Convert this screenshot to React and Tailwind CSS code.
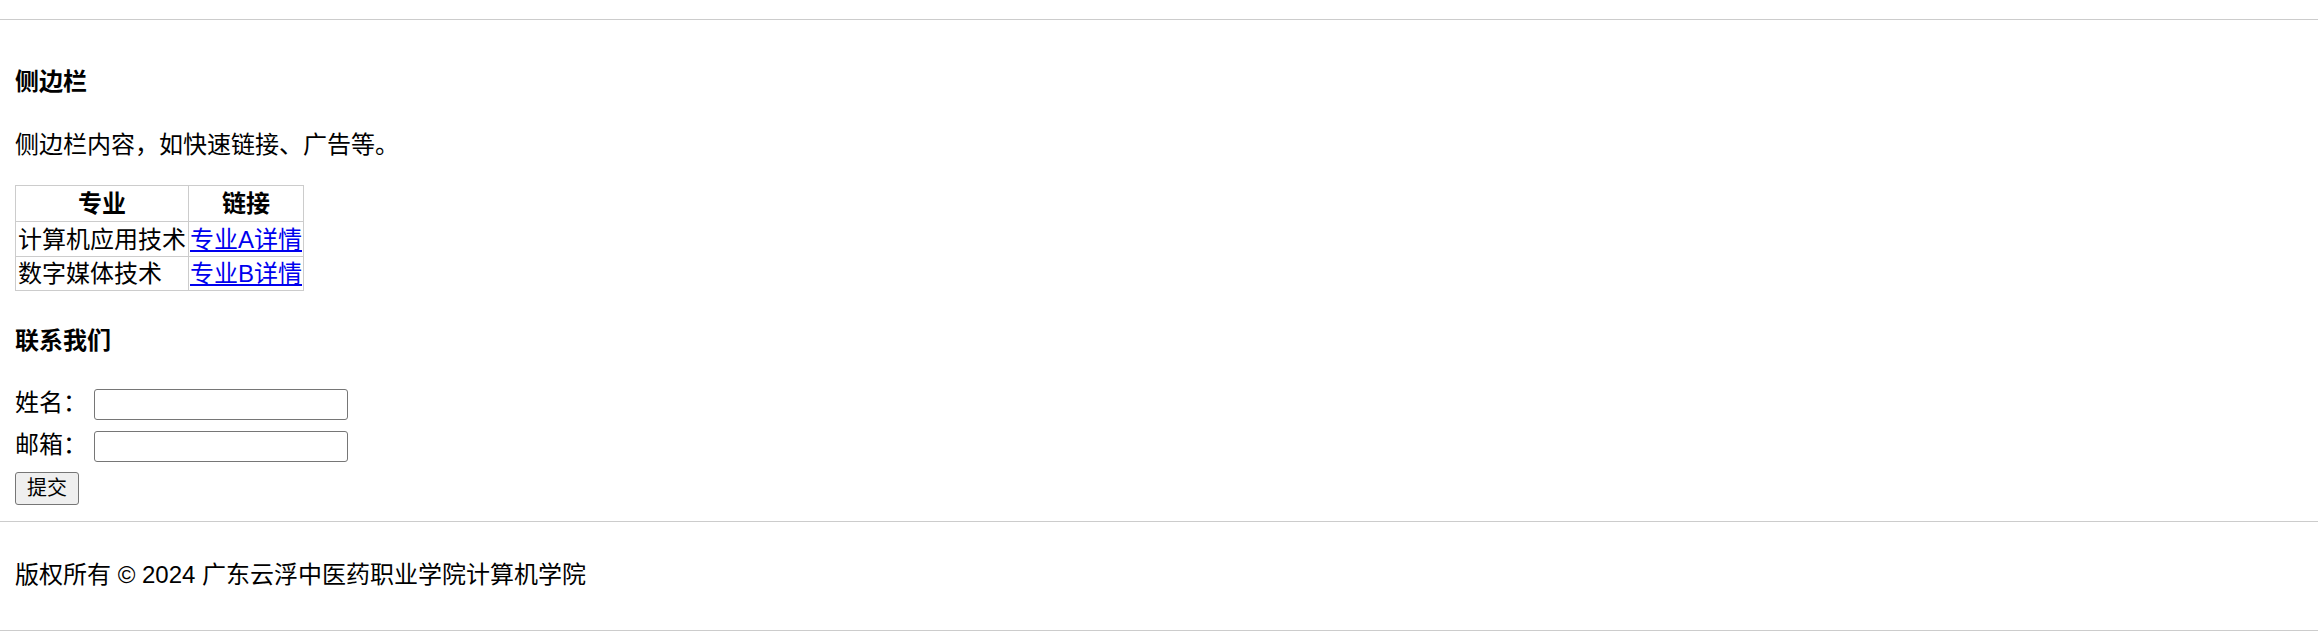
export default function App() {
  return (
    <div className="bg-white text-black text-[24px] font-['Liberation_Sans','Noto_Sans_CJK_SC',sans-serif]">
      <div className="h-[20px] border-b border-[#cccccc]" />
      <aside className="px-[15px] pb-[16px]">
        <h3 className="mt-[44px] font-bold leading-[36px]">侧边栏</h3>
        <p className="mt-[27px] leading-[36px]">侧边栏内容，如快速链接、广告等。</p>
        <table className="mt-[22px] border-collapse">
          <thead>
            <tr>
              <th className="h-[36px] w-[172px] border border-[#cccccc] p-0 text-center font-bold leading-[34px] whitespace-nowrap">专业</th>
              <th className="h-[36px] w-[114px] border border-[#cccccc] p-0 text-center font-bold leading-[34px] whitespace-nowrap">链接</th>
            </tr>
          </thead>
          <tbody>
            <tr>
              <td className="h-[35px] border border-[#cccccc] px-[2px] py-0 leading-[33px] whitespace-nowrap">计算机应用技术</td>
              <td className="h-[35px] border border-[#cccccc] px-[1px] py-0 leading-[33px] whitespace-nowrap">
                <a href="#" className="text-[#0000ee] underline">专业A详情</a>
              </td>
            </tr>
            <tr>
              <td className="h-[34px] border border-[#cccccc] px-[2px] py-0 leading-[32px] whitespace-nowrap">数字媒体技术</td>
              <td className="h-[34px] border border-[#cccccc] px-[1px] py-0 leading-[32px] whitespace-nowrap">
                <a href="#" className="text-[#0000ee] underline">专业B详情</a>
              </td>
            </tr>
          </tbody>
        </table>
        <h3 className="mt-[32px] font-bold leading-[36px]">联系我们</h3>
        <form className="mt-[28px]">
          <div className="flex h-[42px] items-start">
            <label className="mt-[2px] leading-[28px]">姓名：</label>
            <input type="text" className="ml-[7px] mt-[2px] h-[31px] w-[254px] rounded-[3px] border border-[#767676] bg-white" />
          </div>
          <div className="flex h-[42px] items-start">
            <label className="mt-[2px] leading-[28px]">邮箱：</label>
            <input type="email" className="ml-[7px] mt-[2px] h-[31px] w-[254px] rounded-[3px] border border-[#767676] bg-white" />
          </div>
          <button type="button" className="mt-[1px] block h-[33px] w-[64px] rounded-[3px] border border-[#767676] bg-[#efefef] text-[20px] leading-[31px]">提交</button>
        </form>
      </aside>
      <footer className="h-[110px] border-y border-[#cccccc] px-[15px] pt-[35px] leading-[36px]">
        版权所有 © 2024 广东云浮中医药职业学院计算机学院
      </footer>
    </div>
  );
}
